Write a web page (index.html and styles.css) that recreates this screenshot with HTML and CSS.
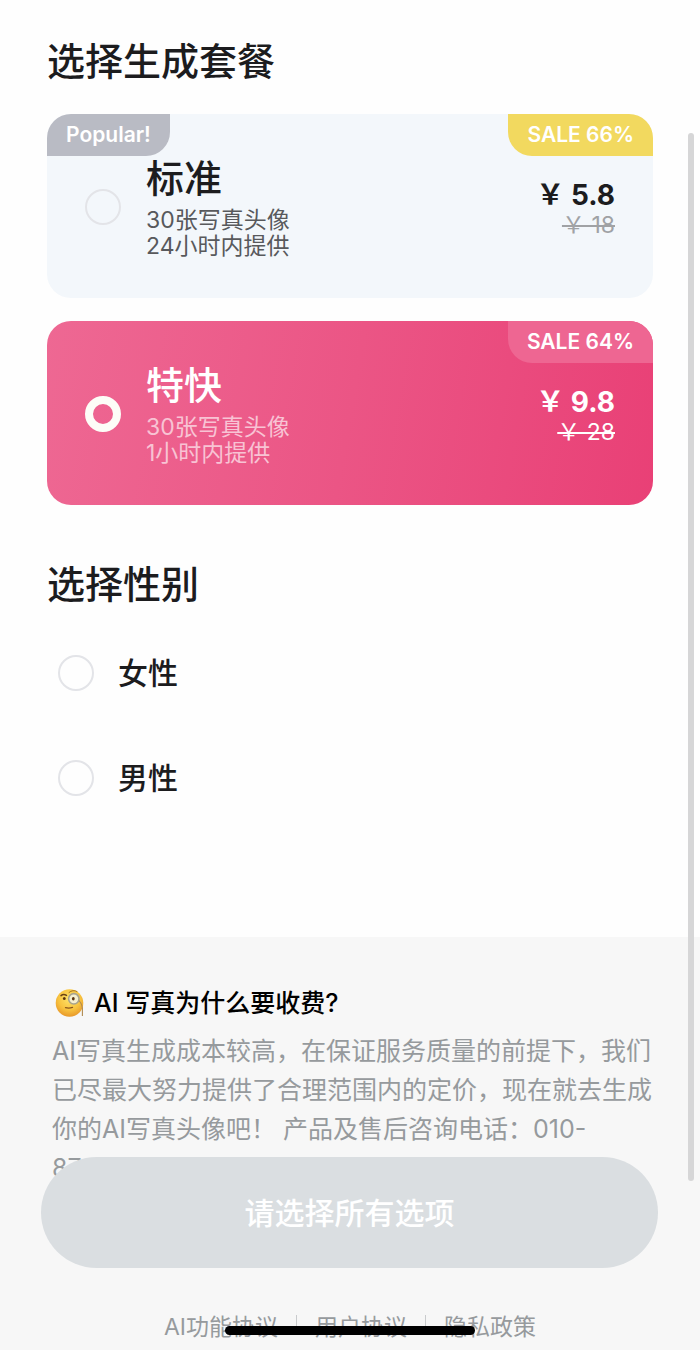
FILE: index.html
```
<!DOCTYPE html>
<html lang="zh-CN">
<head>
    <meta charset="UTF-8">
    <meta name="viewport" content="width=device-width, initial-scale=1.0">
    <title>AI 写真</title>
    <link rel="stylesheet" href="styles.css">
</head>
<body>
    <main class="order">
        <h1 class="title" id="plan-title">选择生成套餐</h1>
        <div class="plans" role="radiogroup" aria-labelledby="plan-title">
            <label class="plan">
                <span class="tag tag-left">Popular!</span>
                <span class="tag tag-right">SALE 66%</span>
                <input class="radio" type="radio" name="plan" value="standard">
                <span class="plan-body">
                    <strong class="plan-name">标准</strong>
                    <span class="plan-desc">30张写真头像<br>24小时内提供</span>
                </span>
                <span class="price">
                    <b>￥ 5.8</b>
                    <s>￥ 18</s>
                </span>
            </label>
            <label class="plan plan-fast">
                <span class="tag tag-right">SALE 64%</span>
                <input class="radio" type="radio" name="plan" value="fast" checked>
                <span class="plan-body">
                    <strong class="plan-name">特快</strong>
                    <span class="plan-desc">30张写真头像<br>1小时内提供</span>
                </span>
                <span class="price">
                    <b>￥ 9.8</b>
                    <s>￥ 28</s>
                </span>
            </label>
        </div>

        <h2 class="title" id="gender-title">选择性别</h2>
        <div class="genders" role="radiogroup" aria-labelledby="gender-title">
            <label class="gender">
                <input class="radio" type="radio" name="gender" value="female">
                <span>女性</span>
            </label>
            <label class="gender">
                <input class="radio" type="radio" name="gender" value="male">
                <span>男性</span>
            </label>
        </div>
    </main>

    <section class="info">
        <h3 class="question">
            <svg class="emoji" viewBox="0 0 30 30" aria-hidden="true">
                <defs>
                    <radialGradient id="face" cx="0.5" cy="0.35" r="0.65">
                        <stop offset="0" stop-color="#fde36a"/>
                        <stop offset="0.6" stop-color="#f8c440"/>
                        <stop offset="1" stop-color="#e8982a"/>
                    </radialGradient>
                </defs>
                <circle cx="14.5" cy="15" r="13.8" fill="url(#face)"/>
                <path d="M6 7.6Q8.5 5.6 11.5 7.4" fill="none" stroke="#6b4316" stroke-width="1.5" stroke-linecap="round"/>
                <path d="M14 4.5Q18 1.2 22 3.5" fill="none" stroke="#a8741f" stroke-width="1" stroke-linecap="round"/>
                <ellipse cx="9.3" cy="10.4" rx="1.4" ry="1.5" fill="#5a3510"/>
                <circle cx="18.8" cy="10.8" r="5.2" fill="#f6efcf" stroke="#a9a48d" stroke-width="1.6"/>
                <ellipse cx="18.3" cy="10.8" rx="1.4" ry="1.8" fill="#5a3510"/>
                <path d="M24 12.5Q27.8 17 27.4 22V28" fill="none" stroke="#b08a50" stroke-width="1.1"/>
                <path d="M10.5 19.6Q14 20.6 17.5 19.4" fill="none" stroke="#8a561c" stroke-width="1.3" stroke-linecap="round"/>
            </svg>
            AI 写真为什么要收费?
        </h3>
        <p class="answer">AI写真生成成本较高，在保证服务质量的前提下，我们已尽最大努力提供了合理范围内的定价，现在就去生成你的AI写真头像吧！ 产品及售后咨询电话：010-<br>87</p>
        <footer class="links">
            <a href="#">AI功能协议</a>
            <a href="#">用户协议</a>
            <a href="#">隐私政策</a>
        </footer>
    </section>

    <button class="submit" type="button" disabled>请选择所有选项</button>
    <div class="scroll-thumb"></div>
    <div class="home-bar"></div>
</body>
</html>
```
FILE: styles.css
```
:root {
    --text-color: #1c1c1e;
    --muted-color: #969a9d;
    --page-bg: #fefefe;
    --info-bg: #f7f7f7;
    --plan-bg: #f3f7fb;
    --sale-bg: #f2d95f;
}

* {
    margin: 0;
    padding: 0;
    box-sizing: border-box;
}

body {
    font-family: Inter, "Noto Sans CJK SC", sans-serif;
    background-color: var(--page-bg);
    color: var(--text-color);
    min-height: 100vh;
    display: flex;
    flex-direction: column;
}

.order {
    padding: 34px 47px 137px;
}

.title {
    font-size: 38px;
    font-weight: 500;
    line-height: 54px;
}

.plans {
    display: flex;
    flex-direction: column;
    gap: 23px;
    margin: 26px 0 52px;
}

.plan {
    position: relative;
    display: flex;
    align-items: center;
    gap: 25px;
    height: 184px;
    padding: 2px 38px 0;
    border-radius: 24px;
    background-color: var(--plan-bg);
    overflow: hidden;
    cursor: pointer;
}

.plan-fast {
    color: #fff;
    background: linear-gradient(100deg, #ee6893 0%, #eb5585 50%, #e94076 100%);
}

.tag {
    position: absolute;
    top: 0;
    padding: 0 19px;
    font-size: 21px;
    font-weight: 600;
    line-height: 42px;
    color: #fff;
}

.tag-left {
    left: 0;
    background-color: #b9bbc4;
    border-bottom-right-radius: 24px;
}

.tag-right {
    right: 0;
    background-color: var(--sale-bg);
    border-bottom-left-radius: 24px;
}

.plan-fast .tag-right {
    background-color: #ee6692;
}

.radio {
    appearance: none;
    flex: none;
    width: 36px;
    height: 36px;
    border: 2px solid #e3e4e8;
    border-radius: 50%;
    cursor: pointer;
}

.radio:checked {
    border: 8px solid #fdfdf7;
}

.plan-body {
    flex: 1;
    display: flex;
    flex-direction: column;
    gap: 6px;
}

.plan-name {
    font-size: 38px;
    font-weight: 500;
    line-height: 46px;
}

.plan-desc {
    font-size: 23px;
    line-height: 26px;
    color: #58595c;
}

.plan-fast .plan-desc {
    color: #f8c3d4;
}

.price {
    display: flex;
    flex-direction: column;
    align-items: flex-end;
    padding-top: 6px;
    line-height: 30px;
}

.price b {
    font-size: 28px;
    font-weight: 700;
}

.price s {
    font-size: 23px;
    color: #a0a2a5;
}

.plan-fast .price s {
    color: #fff;
}

.genders {
    display: flex;
    flex-direction: column;
    gap: 61px;
    padding: 40px 11px 0;
}

.gender {
    display: flex;
    align-items: center;
    gap: 24px;
    font-size: 30px;
    font-weight: 500;
    line-height: 44px;
    cursor: pointer;
}

.info {
    flex: 1;
    padding: 46px 47px 0;
    background-color: var(--info-bg);
}

.question {
    display: flex;
    align-items: center;
    gap: 9px;
    padding-left: 8px;
    font-size: 25px;
    font-weight: 500;
    line-height: 40px;
    color: #000;
}

.emoji {
    width: 30px;
    height: 30px;
}

.answer {
    margin-top: 9px;
    padding-left: 5px;
    font-size: 25px;
    line-height: 39px;
    color: var(--muted-color);
}

.links {
    display: flex;
    justify-content: center;
    margin-top: 122px;
    font-size: 23px;
    line-height: 34px;
}

.links a {
    color: var(--muted-color);
    text-decoration: none;
}

.links a + a::before {
    content: "";
    display: inline-block;
    width: 1px;
    height: 20px;
    margin: 0 18px;
    background-color: #c9cbcd;
}

.submit {
    position: fixed;
    left: 41px;
    right: 42px;
    bottom: 82px;
    height: 111px;
    padding-bottom: 4px;
    border: none;
    border-radius: 56px;
    background-color: #dadee1;
    color: #fff;
    font-family: inherit;
    font-size: 30px;
    font-weight: 500;
}

.scroll-thumb {
    position: fixed;
    top: 133px;
    right: 6px;
    bottom: 169px;
    width: 6px;
    border-radius: 3px;
    background-color: #d6d6d7;
}

.home-bar {
    position: fixed;
    left: 50%;
    bottom: 15px;
    width: 250px;
    height: 9px;
    margin-left: -125px;
    border-radius: 5px;
    background-color: #000;
}
```
